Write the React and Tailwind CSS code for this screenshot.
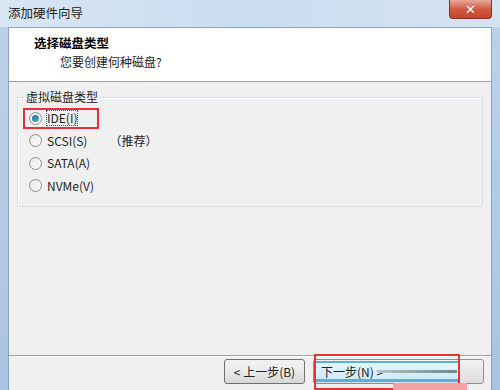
import React from 'react';

const font = { fontFamily: '"Noto Sans CJK SC", "Microsoft YaHei", sans-serif' };

function Radio({ label, checked, extra, boxed }) {
  return (
    <div className="relative flex h-[22.5px] items-center">
      <span className="ml-[11px] flex h-[13px] w-[13px] items-center justify-center rounded-full border border-[#8e8f8f] bg-gradient-to-br from-[#e8e8e8] to-[#fbfbfb]">
        {checked && <span className="h-[7px] w-[7px] rounded-full bg-gradient-to-br from-[#2b6f8e] to-[#3fb1d6]" />}
      </span>
      <span className={'ml-[5px] leading-[14px] ' + (checked ? 'outline-1 outline-dotted outline-[#555]' : '')}>{label}</span>
      {extra && <span className="ml-[22px]">{extra}</span>}
      {boxed && (
        <span className="absolute left-[5px] top-[1px] h-[21px] w-[76px] border-2 border-[#e8323a]" />
      )}
    </div>
  );
}

export default function App() {
  return (
    <div className="flex h-[390px] w-[500px] flex-col overflow-hidden bg-gradient-to-b from-[#bcd3ea] to-[#a9c4e2] text-[12px] text-[#1e1e1e]" style={font}>
      {/* Title bar */}
      <div className="relative flex h-[27px] shrink-0 items-center bg-gradient-to-r from-[#d8e6f4] via-[#c9dcef] to-[#d6e4f2] pl-[8px]">
        <span className="text-[12.5px] text-[#222]">添加硬件向导</span>
        <div className="absolute right-[8px] top-0 flex h-[19px] w-[43px] items-center justify-center rounded-b-[4px] border border-t-0 border-[#8a2f24] bg-gradient-to-b from-[#e9a99a] via-[#cf5a45] to-[#c2452e]">
          <span className="text-[13px] font-bold leading-none text-white" style={{ fontFamily: '"DejaVu Sans", sans-serif' }}>✕</span>
        </div>
      </div>

      {/* Client area */}
      <div className="mx-[8px] flex flex-1 flex-col border border-b-0 border-[#8ea3bb] bg-[#f0f0f0]">
        <div className="h-[54px] shrink-0 border-b border-[#a0a0a0] bg-white pl-[25px] pt-[7px]">
          <div className="text-[12.5px] font-bold leading-[16px] text-black">选择磁盘类型</div>
          <div className="pl-[26px] pt-[3px] leading-[16px]">您要创建何种磁盘?</div>
        </div>

        <div className="h-[273px] shrink-0 px-[8px] pt-[8px]">
          <fieldset className="h-[117px] rounded-[2px] border border-[#d5dfe5] px-0 pb-0 shadow-[inset_1px_1px_0_#ffffff]">
            <legend className="ml-[6px] px-[2px] leading-[14px]">虚拟磁盘类型</legend>
            <div className="pt-[3px]">
              <Radio label="IDE(I)" checked boxed />
              <Radio label="SCSI(S)" extra="（推荐）" />
              <Radio label="SATA(A)" />
              <Radio label="NVMe(V)" />
            </div>
          </fieldset>
        </div>

        <div className="flex flex-1 items-start justify-end gap-[8px] border-t border-[#a0a0a0] pr-[7px] pt-[3px] shadow-[inset_0_1px_0_#ffffff]">
          <button className="flex h-[25px] w-[81px] items-center justify-center rounded-[3px] border border-[#707070] bg-gradient-to-b from-[#f2f2f2] via-[#ebebeb] to-[#d6d6d6] text-[12px] text-[#222]">
            &lt; 上一步(B)
          </button>
          <div className="relative">
            <button className="h-[25px] w-[171px] rounded-[3px] border border-[#8f8f8f] bg-gradient-to-b from-[#f2f2f2] to-[#dcdcdc]" aria-label="下一步" />
            <span className="absolute left-[1px] top-[2px] h-[21px] w-[144px] border-t-2 border-b-[3px] border-[#59b0db] bg-gradient-to-b from-[#e4f5fc] to-[#cdebf9]" />
            <span className="absolute left-[8px] top-[5px] z-10 text-[12px] leading-[16px] text-[#222]">下一步(N) &gt;</span>
            <span className="absolute left-[64px] top-[11px] z-10 h-[3px] w-[80px] bg-gradient-to-r from-[#b9c4c4] to-[#6a8a86]" />
            <span className="absolute left-[1px] -top-[5px] z-20 h-[36px] w-[146px] border-2 border-[#e8323a]" />
            <span className="absolute left-[80px] top-[24px] z-20 h-[10px] w-[74px] bg-[#f6a3a6]" />
          </div>
        </div>
      </div>
    </div>
  );
}
